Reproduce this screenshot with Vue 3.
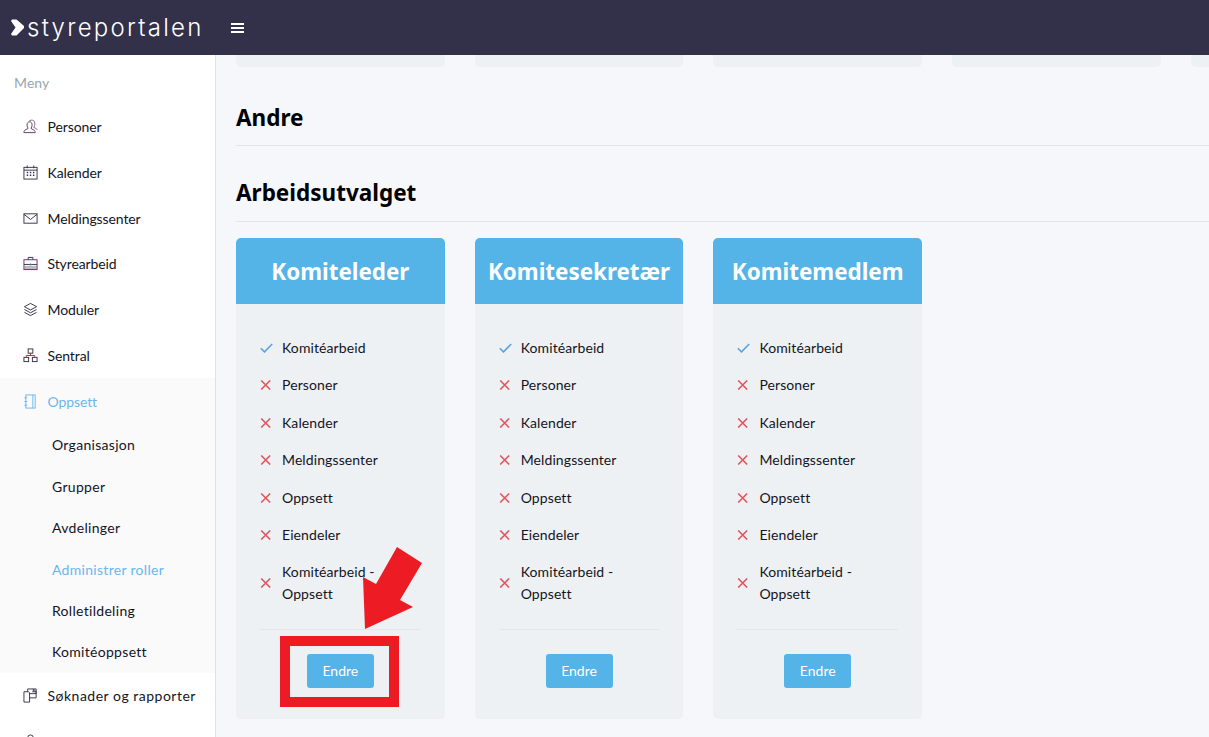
<script setup>
import { ref } from 'vue'

const menu = ref([
  { label: 'Personer', icon: 'user' },
  { label: 'Kalender', icon: 'calendar' },
  { label: 'Meldingssenter', icon: 'mail' },
  { label: 'Styrearbeid', icon: 'case' },
  { label: 'Moduler', icon: 'layers' },
  { label: 'Sentral', icon: 'tree' },
])
const submenu = ['Organisasjon', 'Grupper', 'Avdelinger', 'Administrer roller', 'Rolletildeling', 'Komitéoppsett']
const roles = ['Komiteleder', 'Komitesekretær', 'Komitemedlem']
const perms = [
  { label: 'Komitéarbeid', ok: true },
  { label: 'Personer' },
  { label: 'Kalender' },
  { label: 'Meldingssenter' },
  { label: 'Oppsett' },
  { label: 'Eiendeler' },
  { label: 'Komitéarbeid - Oppsett' },
]
</script>

<template>
  <div class="page">
    <header class="topbar">
      <a class="logo">
        <svg class="logo-mark" width="15" height="17" viewBox="0 0 15 17">
          <path d="M2 .5h4.500L14 7v2l-7.500 7.500H2L1 15l4.500-6.500L1 2z" fill="#fff" />
        </svg>
        <span class="logo-text">styreportalen</span>
      </a>
      <button class="burger"><span></span><span></span><span></span></button>
    </header>

    <div class="layout">
      <aside class="sidebar">
        <div class="menu-title">Meny</div>
        <div v-for="item in menu" :key="item.label" class="nav-item">
          <svg class="nav-icon" viewBox="0 0 16 16">
            <g v-if="item.icon === 'user'">
              <path d="M5.500 10c-.6-1-1.200-2-1.200-3.500C4.300 4.300 5.300 3 7 3s2.700 1.300 2.700 3.500C9.700 8 9 9 8.500 10l3.500 2c.7.400 1 1 1 2.500H1c0-1.500.3-2.100 1-2.500z" stroke="#5a3a6a" />
              <path d="M6.500 2.500C7.500 1 10 .8 11.500 2c1.300 1.100 1.300 3.500.8 5l-.8 2 2.700 1.300c.6.300.8.800.8 1.500" stroke="#8a5a7a" />
            </g>
            <g v-else-if="item.icon === 'calendar'">
              <rect x="1" y="2.500" width="14" height="12.500" />
              <path d="M4.500 .5v3M11.500 .5v3M1 5.500h14" />
              <path d="M4 8h1.500M7.300 8h1.500M10.600 8h1.500M4 11h1.500M7.300 11h1.500M10.600 11h1.500" stroke-width="1.500" />
            </g>
            <g v-else-if="item.icon === 'mail'">
              <rect x="1" y="3" width="14" height="10" />
              <path d="M1 3.500l7 5.500 7-5.500" />
            </g>
            <g v-else-if="item.icon === 'case'">
              <rect x="1.500" y="10.500" width="13" height="4" fill="#bbb" stroke="none" />
              <rect x="1" y="4" width="14" height="10.500" stroke="#6b2a72" />
              <path d="M5.500 4V1.500h5V4M1 9h14" />
              <circle cx="8" cy="9" r="1" fill="#3d7f8f" stroke="none" />
            </g>
            <g v-else-if="item.icon === 'layers'">
              <path d="M8 1.500l6.500 3.500L8 8.500 1.500 5zM1.500 8L8 11.500 14.500 8M1.500 11L8 14.500 14.500 11" />
            </g>
            <g v-else-if="item.icon === 'tree'">
              <rect x="5.500" y="1" width="5" height="4.500" />
              <rect x="1" y="10" width="5" height="4.500" />
              <rect x="10" y="10" width="5" height="4.500" />
              <path d="M8 5.500V8M3.500 10V8h9v2" stroke="#a33" />
            </g>
          </svg>
          <span>{{ item.label }}</span>
        </div>

        <div class="nav-group">
          <div class="nav-item active">
            <svg class="nav-icon" viewBox="0 0 16 16">
              <rect x="3" y="1" width="10" height="14" />
              <path d="M10.500 1v14M1.500 4H4.500M1.500 8H4.500M1.500 12H4.500" />
            </svg>
            <span>Oppsett</span>
          </div>
          <div
            v-for="sub in submenu"
            :key="sub"
            class="sub-item"
            :class="{ current: sub === 'Administrer roller' }"
          >{{ sub }}</div>
        </div>

        <div class="nav-item wide">
          <svg class="nav-icon" viewBox="0 0 16 16">
            <path d="M1 4h5l1 1v10H1zM5 4V1h6v3M7 6h7V1h-3M11 1l3 3" />
            <path d="M10 4h4v6.500h-7" />
          </svg>
          <span>Søknader og rapporter</span>
        </div>
        <div class="nav-item">
          <svg class="nav-icon" viewBox="0 0 16 16">
            <circle cx="8" cy="4" r="3" />
            <path d="M2 15c0-4 2-6 6-6s6 2 6 6z" />
          </svg>
          <span>Medlemskap</span>
        </div>
      </aside>

      <main class="content">
        <div class="cards stubs">
          <div v-for="n in 5" :key="n" class="stub"></div>
        </div>

        <h2 class="section-title first">Andre</h2>
        <h2 class="section-title">Arbeidsutvalget</h2>

        <div class="cards">
          <section v-for="role in roles" :key="role" class="card">
            <h3 class="card-head">{{ role }}</h3>
            <div class="card-body">
              <ul class="perms">
                <li v-for="p in perms" :key="p.label">
                  <svg v-if="p.ok" class="perm-icon" viewBox="0 0 13 10">
                    <path d="M.8 5.200l3.700 3.700L12.200 1" stroke="#5ba3e0" />
                  </svg>
                  <svg v-else class="perm-icon" viewBox="0 0 13 10">
                    <path d="M1.200 .5l9 9M10.200 .5l-9 9" stroke="#e0585f" />
                  </svg>
                  <span>{{ p.label }}</span>
                </li>
              </ul>
              <div class="card-foot">
                <button class="btn">Endre</button>
              </div>
            </div>
          </section>
        </div>
      </main>
    </div>

    <!-- annotation painted on top of the screenshot -->
    <div class="mark-box"></div>
    <svg class="mark-arrow" width="1209" height="737" viewBox="0 0 1209 737">
      <polygon points="365,629 363,577 376,584 397,547 422,563 400,600 413,607" fill="#ed1c24" />
    </svg>
  </div>
</template>

<style>
html,
body {
  margin: 0;
  overflow: hidden;
}
</style>

<style scoped>
.page {
  position: relative;
  height: 100vh;
  overflow: hidden;
  display: flex;
  flex-direction: column;
  font-family: "Lato", "Noto Sans", sans-serif;
  font-size: 14px;
  letter-spacing: 0.1px;
  color: #14141f;
  background: #f5f7fb;
}

.topbar {
  flex: 0 0 55px;
  display: flex;
  align-items: center;
  background: #33314a;
}

.logo {
  display: flex;
  align-items: center;
  width: 231px;
  padding-left: 10px;
  box-sizing: border-box;
}

.logo-mark {
  flex: none;
}

.logo-text {
  margin-left: 2px;
  font-family: "Inter", sans-serif;
  font-weight: 300;
  font-size: 24px;
  line-height: 30px;
  letter-spacing: 2.250px;
  color: #fff;
}

.burger {
  display: flex;
  flex-direction: column;
  gap: 2px;
  padding: 0;
  border: 0;
  background: none;
}

.burger span {
  display: block;
  width: 13px;
  height: 2px;
  background: #fff;
}

.layout {
  flex: 1;
  display: flex;
  min-height: 0;
}

.sidebar {
  flex: 0 0 215px;
  background: #fff;
  border-right: 1px solid #dfe1e8;
  overflow: hidden;
}

.menu-title {
  padding: 16.500px 14px 10.100px;
  line-height: 22px;
  color: #9aa5b1;
}

.nav-item {
  height: 45.8px;
  display: flex;
  align-items: center;
  padding-left: 23px;
  box-sizing: border-box;
  letter-spacing: -0.1px;
}

.nav-item.wide {
  letter-spacing: 0.5px;
}

.nav-icon {
  flex: none;
  width: 15px;
  height: 15px;
  margin-right: 9.500px;
  fill: none;
  stroke: #33314a;
  stroke-width: 1;
}

.nav-group {
  background: #fafafb;
}

.nav-item.active {
  color: #6cb6ee;
}

.nav-item.active .nav-icon {
  stroke: #6cb6ee;
}

.sub-item {
  height: 41.4px;
  display: flex;
  align-items: center;
  padding-left: 52px;
  letter-spacing: 0.3px;
}

.sub-item.current {
  color: #6cb6ee;
}

.content {
  flex: 1;
  min-width: 0;
  padding-left: 20px;
  overflow: hidden;
}

.cards {
  display: grid;
  grid-template-columns: repeat(5, 208.700px);
  gap: 30px;
}

.stub {
  height: 12px;
  background: #eef1f3;
  border-radius: 0 0 5px 5px;
}

.section-title {
  margin: 32px 0 0;
  padding-bottom: 13px;
  border-bottom: 1px solid #e3e5ea;
  font-family: "Noto Sans", sans-serif;
  font-size: 22.500px;
  line-height: 30px;
  font-weight: 700;
  letter-spacing: 0;
  color: #000;
}

.section-title.first {
  margin-top: 36px;
  padding-bottom: 12px;
}

.section-title ~ .cards {
  margin-top: 16px;
}

.card {
  border-radius: 5px;
  overflow: hidden;
  background: #eef1f3;
}

.card-head {
  margin: 0;
  height: 66px;
  display: flex;
  align-items: center;
  justify-content: center;
  background: #54b4e8;
  color: #fff;
  font-family: "Noto Sans", sans-serif;
  font-size: 22.400px;
  font-weight: 700;
  letter-spacing: 0;
}

.card-body {
  padding: 25px 24px 31px;
}

.perms {
  margin: 0;
  padding: 0;
  list-style: none;
}

.perms li {
  display: flex;
  align-items: center;
  padding: 7.750px 0;
  line-height: 22px;
}

.perms li:last-child {
  padding-top: 7px;
  padding-bottom: 7.750px;
}

.perm-icon {
  flex: none;
  width: 13px;
  height: 10px;
  margin-right: 9px;
  fill: none;
  stroke-width: 1.600;
}

.card-foot {
  margin-top: 16px;
  padding-top: 24px;
  border-top: 1px solid #e3e5ea;
  text-align: center;
}

.btn {
  display: block;
  width: 67px;
  height: 34px;
  margin: 0 auto;
  padding: 0;
  border: 0;
  border-radius: 3px;
  background: #54b4e8;
  color: #fff;
  font: inherit;
}

.mark-box {
  position: absolute;
  left: 280px;
  top: 636px;
  width: 119px;
  height: 71px;
  box-sizing: border-box;
  border: 10px solid #ed1c24;
}

.mark-arrow {
  position: absolute;
  left: 0;
  top: 0;
  pointer-events: none;
}
</style>
